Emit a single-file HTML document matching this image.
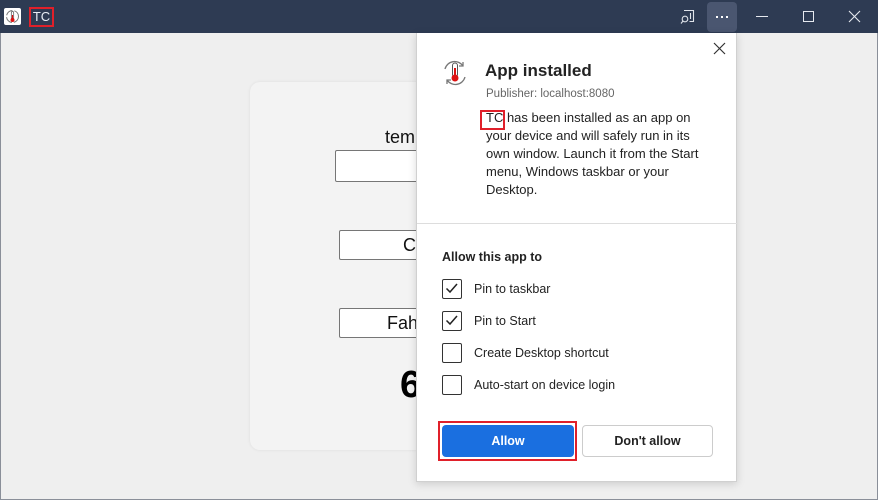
<!DOCTYPE html>
<html><head><style>
*{box-sizing:border-box;margin:0;padding:0}
body{width:878px;height:500px;overflow:hidden;background:#2e3b53;font-family:"Liberation Sans",sans-serif;position:relative}
.win{position:absolute;left:0;top:33px;width:878px;height:467px;background:#efefef;border-left:1px solid #8a8f99;border-right:1px solid #8a8f99;border-bottom:1px solid #8a8f99}
.abs{position:absolute}
.card{left:250px;top:82px;width:300px;height:368px;background:#f3f3f3;border-radius:10px;box-shadow:0 0 3px rgba(0,0,0,.08)}
.box{background:#fff;border:1px solid #767676;border-radius:2px}
.pop{left:416px;top:33px;width:321px;height:449px;background:#fff;border:1px solid #d0d0d0;border-top:none;box-shadow:0 2px 8px rgba(0,0,0,.15)}
.t{font-size:12.5px;color:#222;white-space:nowrap}
.cb{position:absolute;left:25px;width:20px;height:20px;border:1.5px solid #333;border-radius:2px}
</style></head><body>
<div class="abs" style="left:4px;top:8px;width:17px;height:17px;background:#fff;border-radius:2px"></div>
<svg class="abs" style="left:4px;top:8px" width="17" height="17"><circle cx="8.5" cy="8.5" r="6" fill="none" stroke="#777" stroke-width="1" stroke-dasharray="8 2"/><rect x="7.3" y="3.5" width="2.4" height="8" rx="1.2" fill="#fff" stroke="#555" stroke-width=".7"/><circle cx="8.5" cy="12" r="2" fill="#d11"/><rect x="7.9" y="7" width="1.2" height="5" fill="#d11"/></svg>
<div class="abs" style="left:29px;top:7px;width:25px;height:20px;border:2px solid #e0202a;color:#e8edf5;font-size:13px;line-height:16px;text-align:center">TC</div>
<svg class="abs" style="left:680px;top:9px" width="16" height="16"><path d="M4 1.5h9.5v11h-4" fill="none" stroke="#dfe3ea" stroke-width="1.1"/><path d="M10.5 4v6" stroke="#dfe3ea" stroke-width="1.1"/><circle cx="5" cy="10" r="2.8" fill="none" stroke="#dfe3ea" stroke-width="1.1"/><path d="M3 12l-2 2.5" stroke="#dfe3ea" stroke-width="1.1"/></svg>
<div class="abs" style="left:707px;top:2px;width:30px;height:30px;background:#4a5670;border-radius:4px"></div>
<div class="abs" style="left:716px;top:16px;width:2px;height:2px;background:#fff"></div>
<div class="abs" style="left:721px;top:16px;width:2px;height:2px;background:#fff"></div>
<div class="abs" style="left:726px;top:16px;width:2px;height:2px;background:#fff"></div>
<div class="abs" style="left:756px;top:16px;width:12px;height:1px;background:#e6e9ef"></div>
<div class="abs" style="left:803px;top:11px;width:11px;height:11px;border:1px solid #e6e9ef"></div>
<svg class="abs" style="left:848px;top:10px" width="13" height="13"><path d="M1 1L12 12M12 1L1 12" stroke="#e6e9ef" stroke-width="1.1"/></svg>
<div class="win"></div>
<div class="abs card"></div>
<div class="abs" style="left:385px;top:127px;font-size:18px;color:#111">tem</div>
<div class="abs box" style="left:335px;top:150px;width:100px;height:32px"></div>
<div class="abs box" style="left:339px;top:230px;width:100px;height:30px;font-size:18px;padding:4px 0 0 63px;color:#111">Ce</div>
<div class="abs box" style="left:339px;top:308px;width:100px;height:30px;font-size:18px;padding:4px 0 0 47px;color:#111">Fah</div>
<div class="abs" style="left:400px;top:364px;font-size:38px;font-weight:bold;color:#000">6</div>
<div class="abs pop">
<svg class="abs" style="left:296px;top:9px" width="13" height="13"><path d="M1 1L12 12M12 1L1 12" stroke="#333" stroke-width="1.2"/></svg>
<svg class="abs" style="left:24px;top:26px" width="28" height="28"><path d="M4 10A10 10 0 0 1 22 7" fill="none" stroke="#777" stroke-width="1.3"/><path d="M24 18A10 10 0 0 1 6 21" fill="none" stroke="#777" stroke-width="1.3"/><path d="M22 3v4h-4M6 25v-4h4" fill="none" stroke="#777" stroke-width="1.3"/><rect x="11.5" y="4" width="5" height="14" rx="2.5" fill="#fff" stroke="#555"/><circle cx="14" cy="19" r="3.5" fill="#d11"/><rect x="13" y="9" width="2" height="9" fill="#d11"/></svg>
<div class="abs" style="left:68px;top:28px;font-size:17px;font-weight:bold;color:#222">App installed</div>
<div class="abs" style="left:69px;top:55px;font-size:11.5px;color:#666">Publisher: localhost:8080</div>
<div class="abs t" style="left:69px;top:76px;line-height:18px;font-size:13px">TC has been installed as an app on<br>your device and will safely run in its<br>own window. Launch it from the Start<br>menu, Windows taskbar or your<br>Desktop.</div>
<div class="abs" style="left:63px;top:77px;width:25px;height:20px;border:2px solid #e0202a"></div>
<div class="abs" style="left:0;top:190px;width:321px;height:1px;background:#ddd"></div>
<div class="abs t" style="left:25px;top:217px;font-weight:bold;font-size:12.5px">Allow this app to</div>
<div class="cb" style="top:246px"><svg width="17" height="17"><path d="M3.5 8.5l3.5 3.5 7-8" fill="none" stroke="#222" stroke-width="1.5"/></svg></div>
<div class="abs t" style="left:57px;top:249px">Pin to taskbar</div>
<div class="cb" style="top:278px"><svg width="17" height="17"><path d="M3.5 8.5l3.5 3.5 7-8" fill="none" stroke="#222" stroke-width="1.5"/></svg></div>
<div class="abs t" style="left:57px;top:281px">Pin to Start</div>
<div class="cb" style="top:310px"></div>
<div class="abs t" style="left:57px;top:313px">Create Desktop shortcut</div>
<div class="cb" style="top:342px"></div>
<div class="abs t" style="left:57px;top:345px">Auto-start on device login</div>
<div class="abs" style="left:21px;top:388px;width:139px;height:40px;border:2px solid #e0202a"></div>
<div class="abs" style="left:25px;top:392px;width:132px;height:32px;background:#1a6fe0;border-radius:4px;color:#fff;font-weight:bold;font-size:12.5px;text-align:center;line-height:32px">Allow</div>
<div class="abs" style="left:165px;top:392px;width:131px;height:32px;border:1px solid #ccc;border-radius:4px;color:#222;font-weight:bold;font-size:12.5px;text-align:center;line-height:30px">Don't allow</div>
</div>
</body></html>
